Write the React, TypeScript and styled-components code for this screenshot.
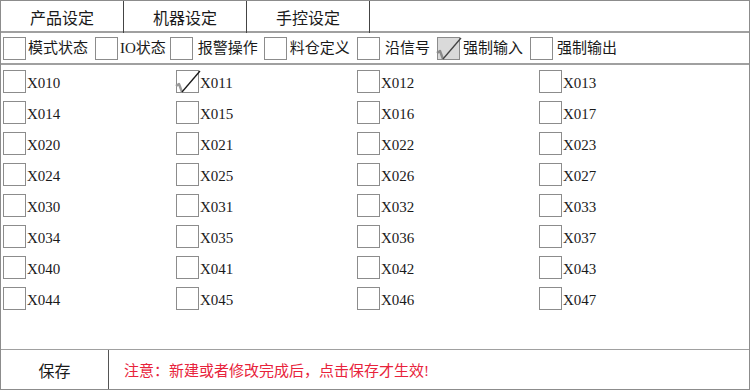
import styled, { createGlobalStyle } from "styled-components";

const GlobalStyle = createGlobalStyle`
    html, body {
        margin: 0;
        padding: 0;
        background: #ffffff;
        overflow: hidden;
    }
    body {
        font-family: "Liberation Serif", "Noto Sans CJK SC", serif;
        color: #1a1a1a;
    }
`;

const Frame = styled.div`
    width: 750px;
    height: 390px;
    box-sizing: border-box;
    border: 1px solid #8c8c8c;
    display: flex;
    flex-direction: column;
`;

const TabBar = styled.div`
    height: 32px;
    box-sizing: border-box;
    border-bottom: 2px solid #a0a0a0;
    display: flex;
`;

const Tab = styled.div`
    width: 123px;
    box-sizing: border-box;
    border-right: 1px solid #444;
    display: flex;
    align-items: center;
    justify-content: center;
    font-size: 16px;
    margin-bottom: -2px;
`;

const FilterBar = styled.div`
    height: 32px;
    box-sizing: border-box;
    border-bottom: 2px solid #a0a0a0;
    display: flex;
    align-items: center;
    padding-left: 2px;
`;

const FilterItem = styled.div<{ $gap: number }>`
    display: flex;
    align-items: center;
    margin-right: ${(p) => p.$gap}px;
`;

const Box = styled.span<{ $filled?: boolean }>`
    position: relative;
    display: inline-block;
    width: 23px;
    height: 23px;
    box-sizing: border-box;
    border: 1px solid #8c8c8c;
    background: ${(p) => (p.$filled ? "#dadada" : "#fff")};
    flex-shrink: 0;
`;

const Label = styled.span<{ $pad: number }>`
    padding-left: ${(p) => p.$pad}px;
    font-size: 15px;
    line-height: 1;
    white-space: nowrap;
`;

const Grid = styled.div`
    flex: 1;
    display: grid;
    grid-template-columns: 173px 181px 182px 1fr;
    grid-auto-rows: 31px;
    padding: 5px 0 0 2px;
`;

const Cell = styled.div`
    display: flex;
    align-items: flex-start;
`;

const CellLabel = styled.span`
    padding-left: 1px;
    padding-top: 6px;
    font-size: 15px;
    line-height: 1;
`;

const Footer = styled.div`
    height: 40px;
    box-sizing: border-box;
    border-top: 1px solid #a0a0a0;
    display: flex;
`;

const SaveCell = styled.div`
    width: 108px;
    box-sizing: border-box;
    border-right: 1px solid #555;
    display: flex;
    align-items: center;
    justify-content: center;
    font-size: 16px;
`;

const Notice = styled.div`
    display: flex;
    align-items: center;
    padding-left: 15px;
    color: #e8233b;
    font-size: 15px;
`;

const CheckMark = styled.svg`
    position: absolute;
    left: -4px;
    top: -2px;
    width: 30px;
    height: 26px;
    overflow: visible;
`;

function Tick({ light }: { light?: boolean }) {
    return (
        <CheckMark viewBox="0 0 30 26">
            <path d="M3 17 L6 15 L9 23" fill="none" stroke={light ? "#8a8a8a" : "#9a9a9a"} strokeWidth="2.4" strokeLinejoin="round" />
            <path d="M9 23 L27 2" fill="none" stroke={light ? "#444" : "#1a1a1a"} strokeWidth="1.3" />
        </CheckMark>
    );
}

const filters = [
    { label: "模式状态", pad: 2, gap: 7 },
    { label: "IO状态", pad: 2, gap: 4 },
    { label: "报警操作", pad: 5, gap: 6 },
    { label: "料仓定义", pad: 3, gap: 7 },
    { label: "沿信号", pad: 5, gap: 7 },
    { label: "强制输入", pad: 3, gap: 7, checked: true },
    { label: "强制输出", pad: 4, gap: 0 },
];

const codes = [
    "X010", "X011", "X012", "X013",
    "X014", "X015", "X016", "X017",
    "X020", "X021", "X022", "X023",
    "X024", "X025", "X026", "X027",
    "X030", "X031", "X032", "X033",
    "X034", "X035", "X036", "X037",
    "X040", "X041", "X042", "X043",
    "X044", "X045", "X046", "X047",
];

function App() {
    return (
        <>
            <GlobalStyle />
            <Frame>
                <TabBar>
                    <Tab>产品设定</Tab>
                    <Tab>机器设定</Tab>
                    <Tab>手控设定</Tab>
                </TabBar>
                <FilterBar>
                    {filters.map((f) => (
                        <FilterItem key={f.label} $gap={f.gap}>
                            <Box $filled={f.checked}>{f.checked && <Tick light />}</Box>
                            <Label $pad={f.pad}>{f.label}</Label>
                        </FilterItem>
                    ))}
                </FilterBar>
                <Grid>
                    {codes.map((c) => (
                        <Cell key={c}>
                            <Box>{c === "X011" && <Tick />}</Box>
                            <CellLabel>{c}</CellLabel>
                        </Cell>
                    ))}
                </Grid>
                <Footer>
                    <SaveCell>保存</SaveCell>
                    <Notice>注意：新建或者修改完成后，点击保存才生效!</Notice>
                </Footer>
            </Frame>
        </>
    );
}

export default App;
